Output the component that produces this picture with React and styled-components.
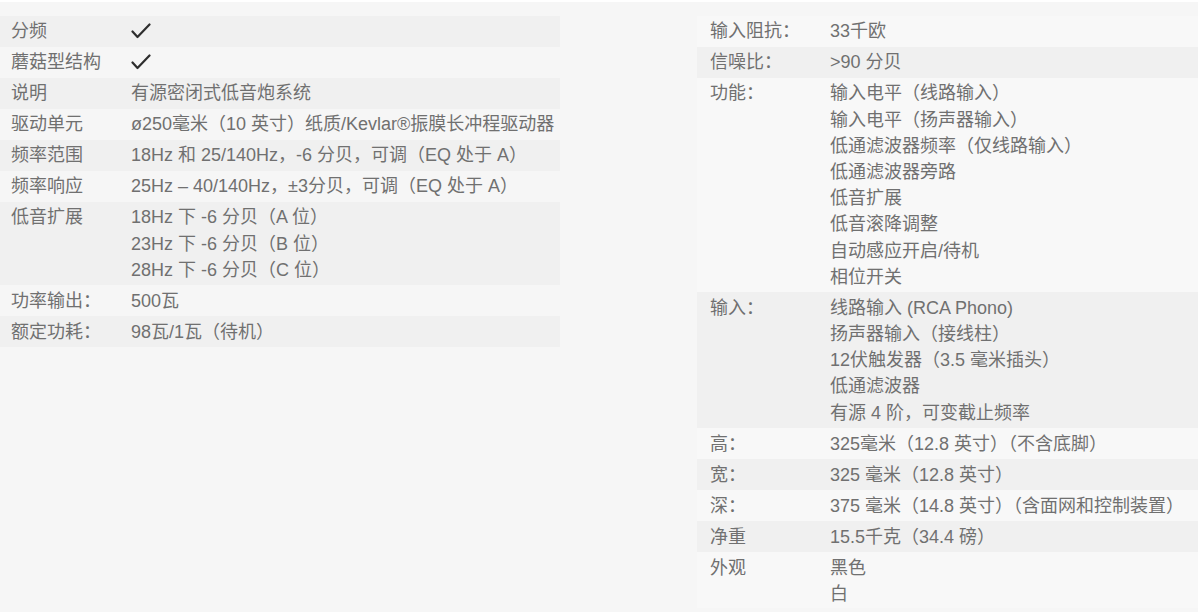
import React from "react";
import styled, { createGlobalStyle } from "styled-components";

const GlobalStyle = createGlobalStyle`
  body {
    margin: 0;
    background: #ffffff;
    font-family: "Liberation Sans", "Noto Sans CJK SC", sans-serif;
  }
`;

const Page = styled.div`
  margin: 2px 2px 0 0;
  height: 610px;
  box-sizing: border-box;
  padding: 14px 0 4px 0;
  background-color: #f6f6f6;
  display: flex;
  align-items: stretch;
`;

const Table = styled.div`
  width: ${(p) => p.$width}px;
  margin-left: ${(p) => (p.$right ? "auto" : "0")};
  align-self: ${(p) => (p.$right ? "stretch" : "flex-start")};
  background-color: ${(p) => (p.$right ? "#f8f8f8" : "transparent")};
  display: flex;
  flex-direction: column;

  & > div:nth-child(${(p) => p.$stripe}) {
    background-color: #f0f0f0;
  }
`;

const Row = styled.div`
  display: grid;
  grid-template-columns: ${(p) => p.$labelWidth}px 1fr;
  padding: 2.4px 0;
  font-size: 18px;
  line-height: 26.2px;
  color: #707070;
`;

const Label = styled.div`
  padding-left: ${(p) => p.$pad}px;
  white-space: nowrap;
`;

const Value = styled.div`
  display: flex;
  flex-direction: column;
  white-space: nowrap;
`;

const Check = styled.svg`
  display: block;
  margin: 5px 0 0 0;
`;

const CheckMark = () => (
  <Check width="20" height="16" viewBox="0 0 20 16">
    <polyline
      points="1.5,8.5 6.5,14 18.5,1.5"
      fill="none"
      stroke="#2e2e2e"
      strokeWidth="2.2"
      strokeLinecap="round"
      strokeLinejoin="round"
    />
  </Check>
);

const leftRows = [
  { label: "分频", check: true },
  { label: "蘑菇型结构", check: true },
  { label: "说明", lines: ["有源密闭式低音炮系统"] },
  { label: "驱动单元", lines: ["ø250毫米（10 英寸）纸质/Kevlar®振膜长冲程驱动器"] },
  { label: "频率范围", lines: ["18Hz 和 25/140Hz，-6 分贝，可调（EQ 处于 A）"] },
  { label: "频率响应", lines: ["25Hz – 40/140Hz，±3分贝，可调（EQ 处于 A）"] },
  {
    label: "低音扩展",
    lines: [
      "18Hz 下 -6 分贝（A 位）",
      "23Hz 下 -6 分贝（B 位）",
      "28Hz 下 -6 分贝（C 位）",
    ],
  },
  { label: "功率输出：", lines: ["500瓦"] },
  { label: "额定功耗：", lines: ["98瓦/1瓦（待机）"] },
];

const rightRows = [
  { label: "输入阻抗：", lines: ["33千欧"] },
  { label: "信噪比：", lines: [">90 分贝"] },
  {
    label: "功能：",
    lines: [
      "输入电平（线路输入）",
      "输入电平（扬声器输入）",
      "低通滤波器频率（仅线路输入）",
      "低通滤波器旁路",
      "低音扩展",
      "低音滚降调整",
      "自动感应开启/待机",
      "相位开关",
    ],
  },
  {
    label: "输入：",
    lines: [
      "线路输入 (RCA Phono)",
      "扬声器输入（接线柱）",
      "12伏触发器（3.5 毫米插头）",
      "低通滤波器",
      "有源 4 阶，可变截止频率",
    ],
  },
  { label: "高：", lines: ["325毫米（12.8 英寸）（不含底脚）"] },
  { label: "宽：", lines: ["325 毫米（12.8 英寸）"] },
  { label: "深：", lines: ["375 毫米（14.8 英寸）（含面网和控制装置）"] },
  { label: "净重", lines: ["15.5千克（34.4 磅）"] },
  { label: "外观", lines: ["黑色", "白"] },
];

const SpecRows = ({ rows, pad, labelWidth }) =>
  rows.map((row) => (
    <Row key={row.label} $labelWidth={labelWidth}>
      <Label $pad={pad}>{row.label}</Label>
      <Value>
        {row.check ? (
          <CheckMark />
        ) : (
          row.lines.map((line) => <span key={line}>{line}</span>)
        )}
      </Value>
    </Row>
  ));

const App = () => (
  <>
    <GlobalStyle />
    <Page>
      <Table $width={560} $stripe="odd">
        <SpecRows rows={leftRows} pad={11} labelWidth={131} />
      </Table>
      <Table $width={501} $stripe="even" $right>
        <SpecRows rows={rightRows} pad={13} labelWidth={133} />
      </Table>
    </Page>
  </>
);

export default App;
